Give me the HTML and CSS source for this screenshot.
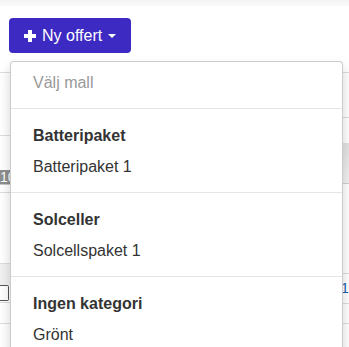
FILE: index.html
```html
<!DOCTYPE html>
<html lang="sv">
<head>
  <meta charset="UTF-8">
  <title>Offerter</title>
  <link rel="stylesheet" href="styles.css">
</head>
<body>
  <div class="topbar"></div>

  <div class="toolbar">
    <div class="btn-group">
      <button class="btn-new" type="button">
        <svg class="icon-plus" width="12" height="12" viewBox="0 0 12 12"><rect x="4" y="0" width="4" height="12"/><rect x="0" y="4" width="12" height="4"/></svg>
        <span>Ny offert</span>
        <span class="caret"></span>
      </button>

      <ul class="dropdown-menu">
        <li class="item muted">Välj mall</li>
        <li class="divider"></li>
        <li class="header">Batteripaket</li>
        <li class="item">Batteripaket 1</li>
        <li class="divider"></li>
        <li class="header">Solceller</li>
        <li class="item">Solcellspaket 1</li>
        <li class="divider"></li>
        <li class="header">Ingen kategori</li>
        <li class="item">Grönt</li>
      </ul>
    </div>
  </div>

  <div class="sheet">
    <div class="col col-left">
      <div class="band b1"></div>
      <div class="band b2"></div>
      <div class="band b3 plain"></div>
      <div class="band bar">10</div>
      <div class="band b5"></div>
      <div class="band b6"></div>
      <div class="band b7 plain"></div>
      <div class="band field"></div>
      <div class="band b9"></div>
      <div class="band b10"></div>
    </div>
    <div class="col col-right">
      <div class="band r1"></div>
      <div class="band r2"></div>
      <div class="band r3 plain"></div>
      <div class="band r4"></div>
      <div class="band r5"></div>
      <div class="band r6"><a href="#">1</a></div>
      <div class="band r7"></div>
      <div class="band r8"></div>
    </div>
  </div>
</body>
</html>
```

FILE: styles.css
```css
* { box-sizing: border-box; }
html, body { overflow: hidden; }
body {
  margin: 0;
  font-family: "Liberation Sans", Arial, sans-serif;
  font-size: 16px;
  color: #333;
  background: #fff;
}

.topbar {
  height: 6px;
  background: linear-gradient(#f4f4f4, #fafafa);
}

.toolbar { padding: 12px 9px 0; }

.btn-group {
  position: relative;
  display: inline-block;
}

.btn-new {
  display: flex;
  align-items: center;
  height: 35px;
  padding: 0 15px;
  border: 0;
  border-radius: 4px;
  background: #3d2ac2;
  color: #fff;
  font-family: inherit;
  font-size: 16px;
  line-height: 21px;
}

.icon-plus {
  fill: #fff;
  margin-right: 6px;
}

.caret {
  width: 0;
  height: 0;
  margin-left: 6px;
  border-top: 4px solid #fff;
  border-left: 4px solid transparent;
  border-right: 4px solid transparent;
}

/* the open menu lies over the list below */
.dropdown-menu {
  position: absolute;
  top: 100%;
  left: 1px;
  z-index: 10;
  width: 333px;
  height: 300px;
  margin: 8px 0 0;
  padding: 4px 0 0;
  list-style: none;
  background: #fff;
  border: 1px solid rgba(0, 0, 0, 0.2);
  border-radius: 4px;
  box-shadow: 0 6px 12px rgba(0, 0, 0, 0.175);
}

.dropdown-menu .item,
.dropdown-menu .header {
  padding: 6px 22px 2px;
  line-height: 22px;
  white-space: nowrap;
}
.dropdown-menu .header {
  padding-bottom: 3px;
  font-weight: bold;
}
.dropdown-menu .muted { color: #999; }

.dropdown-menu .divider {
  height: 1px;
  margin: 12px 0 10px;
  background: #e5e5e5;
}

/* list behind the menu */
.sheet {
  display: flex;
  height: 300px;
}
.col-left { flex: 1; }
.col-right { width: 174px; }

.band { border-bottom: 1px solid #ddd; }
.band.plain { border-bottom: 0; }

.b1 { height: 20px; }
.b2 { height: 63px; }
.b3 { height: 34px; }
.bar {
  height: 15px;
  background: #8e8e8e;
  color: #fff;
  font-size: 14px;
  line-height: 14px;
  border-bottom-color: #c8c8c8;
}
.b5 { height: 8px; }
.b6 { height: 71px; }
.b7 {
  height: 21px;
  background: #f1f1f1;
}
.field {
  height: 16px;
  width: 9px;
  border: 1px solid #555;
  border-left: 0;
  border-radius: 0 2px 2px 0;
}
.b9 { height: 2px; }
.b10 { height: 21px; }

.r1 { height: 20px; }
.r2 { height: 45px; }
.r3 { height: 25px; }
.r4 {
  height: 41px;
  background: linear-gradient(#e2e2e2, #f2f2f2);
  border-bottom-color: #cfcfcf;
}
.r5 { height: 90px; }
.r6 {
  height: 30px;
  padding: 6px 0 0 166px;
  font-size: 14px;
  line-height: 16px;
}
.r6 a { color: #1d5fa8; text-decoration: none; }
.r7 { height: 20px; }
.r8 { height: 30px; }
```
